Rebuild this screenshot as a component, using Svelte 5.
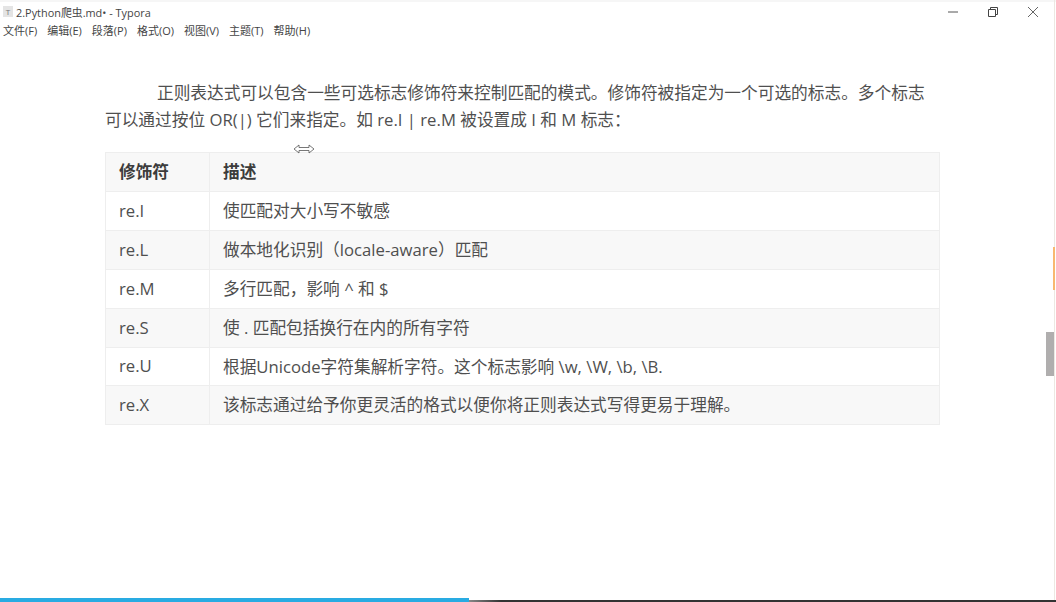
<script>
  const menus = ["文件(F)", "编辑(E)", "段落(P)", "格式(O)", "视图(V)", "主题(T)", "帮助(H)"];
  const rows = [
    ["re.I", "使匹配对大小写不敏感"],
    ["re.L", "做本地化识别（locale-aware）匹配"],
    ["re.M", "多行匹配，影响 ^ 和 $"],
    ["re.S", "使 . 匹配包括换行在内的所有字符"],
    ["re.U", "根据Unicode字符集解析字符。这个标志影响 \\w, \\W, \\b, \\B."],
    ["re.X", "该标志通过给予你更灵活的格式以便你将正则表达式写得更易于理解。"]
  ];
</script>

<div class="window">
  <header class="titlebar">
    <span class="appicon">T</span>
    <span class="title">2.Python爬虫.md• - Typora</span>
    <div class="controls">
      <svg width="12" height="12" viewBox="0 0 12 12"><path d="M1 6h10" stroke="#555" fill="none" /></svg>
      <svg width="12" height="12" viewBox="0 0 12 12"><path d="M1.500 3.500h7v7h-7zM3.500 3.500v-2h7v7h-2" stroke="#444" fill="none" /></svg>
      <svg width="12" height="12" viewBox="0 0 12 12"><path d="M1 1l10 10M11 1L1 11" stroke="#666" fill="none" /></svg>
    </div>
  </header>
  <nav class="menubar">
    {#each menus as m}
      <span>{m}</span>
    {/each}
  </nav>
  <main class="content">
    <p>正则表达式可以包含一些可选标志修饰符来控制匹配的模式。修饰符被指定为一个可选的标志。多个标志可以通过按位 OR(|) 它们来指定。如 re.I | re.M 被设置成 I 和 M 标志：</p>
    <table>
      <thead>
        <tr><th>修饰符</th><th>描述</th></tr>
      </thead>
      <tbody>
        {#each rows as r}
          <tr><td>{r[0]}</td><td>{r[1]}</td></tr>
        {/each}
      </tbody>
    </table>
  </main>

  <!-- resize cursor left over the table -->
  <svg class="cursor" width="22" height="10" viewBox="0 0 22 10"><path d="M1 5l5-4v2.500h10V1l5 4-5 4V6.500H6V9z" fill="#fff" stroke="#555" stroke-width="0.8" /></svg>
  <div class="edge"></div>
  <div class="edge-mark"></div>
  <div class="thumb"></div>
  <div class="progress"><div class="fill"></div></div>
</div>

<style>
  :global(body) {
    margin: 0;
    background: #fff;
  }
  .window {
    position: relative;
    width: 1056px;
    height: 602px;
    overflow: hidden;
    background: #fff;
    font-family: "Open Sans", "Noto Sans CJK SC", sans-serif;
    color: #4f4f4f;
  }
  .titlebar {
    display: flex;
    align-items: center;
    height: 23px;
    padding-left: 3px;
    box-sizing: border-box;
    font-size: 10.900px;
    color: #444;
    background: linear-gradient(#f6f6f6 0, #f6f6f6 2px, #fff 2px);
  }
  .appicon {
    width: 10px;
    height: 11px;
    margin-right: 3px;
    background: #e4e4e4;
    color: #777;
    font-size: 8px;
    line-height: 11px;
    text-align: center;
  }
  .controls {
    margin-left: auto;
    margin-right: 17px;
    display: flex;
    gap: 28px;
  }
  .menubar {
    display: flex;
    gap: 10px;
    height: 16px;
    padding-left: 3px;
    font-size: 11px;
    line-height: 16px;
    color: #444;
  }
  .content {
    padding: 40px 0 0 105px;
    width: 835px;
  }
  p {
    margin: 0 0 19px;
    font-size: 16.700px;
    line-height: 27px;
    text-indent: 52px;
  }
  table {
    width: 835px;
    border-collapse: collapse;
    table-layout: fixed;
    font-size: 16.700px;
  }
  th, td {
    height: 39px;
    padding: 0 13px 2px;
    box-sizing: border-box;
    border: 1px solid #eeeeee;
    text-align: left;
    font-weight: 400;
  }
  tbody tr:nth-child(5) td {
    height: 38px;
  }
  th {
    font-weight: 700;
    color: #3c3c3c;
  }
  th:first-child, td:first-child {
    width: 104px;
  }
  thead tr, tbody tr:nth-child(even) {
    background: #f8f8f8;
  }
  .cursor {
    position: absolute;
    left: 293px;
    top: 144px;
  }
  .edge {
    position: absolute;
    right: 1px;
    top: 0;
    bottom: 0;
    width: 1px;
    background: #ece8e2;
  }
  .edge-mark {
    position: absolute;
    right: 1px;
    top: 247px;
    width: 2px;
    height: 43px;
    background: #f8b870;
  }
  .thumb {
    position: absolute;
    left: 1046px;
    top: 332px;
    width: 8px;
    height: 44px;
    background: #b0aeae;
  }
  .progress {
    position: absolute;
    left: 0;
    right: 0;
    bottom: 0;
    height: 2px;
    background: linear-gradient(90deg, #888 469px, #333 501px);
  }
  .fill {
    position: absolute;
    left: 0;
    bottom: 0;
    width: 469px;
    height: 4px;
    background: #29abe2;
  }
</style>
